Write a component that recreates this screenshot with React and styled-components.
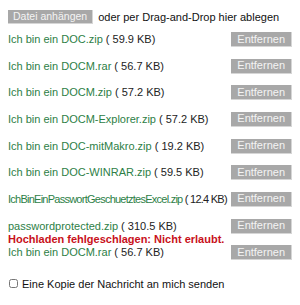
import React from "react";
import styled, { createGlobalStyle } from "styled-components";

const GlobalStyle = createGlobalStyle`
  html, body {
    margin: 0;
    padding: 0;
    background: #fff;
  }
  body {
    font-family: "Liberation Sans", Arial, sans-serif;
    font-size: 11px;
    color: #222;
  }
`;

const Container = styled.div`
  width: 300px;
  height: 305px;
  padding: 10px 8px 0 8px;
  box-sizing: border-box;
`;

const Header = styled.div`
  display: flex;
  align-items: center;
  height: 14px;
  margin-bottom: 8px;
`;

const Button = styled.button`
  font-family: "Liberation Sans", Arial, sans-serif;
  font-size: ${({ $wide }) => ($wide ? "10.5px" : "11px")};
  color: #f4f4f4;
  background-color: #a8a8a8;
  border: none;
  border-right: 1px solid #d6d6d6;
  border-bottom: 1px solid #d6d6d6;
  height: ${({ $wide }) => ($wide ? "14px" : "15px")};
  padding: 0 ${({ $wide }) => ($wide ? "5px" : "6px")};
  line-height: 13px;
  cursor: pointer;
  flex-shrink: 0;
`;

const HintText = styled.span`
  margin-left: 5px;
  color: #111;
`;

const FileList = styled.ul`
  list-style: none;
  margin: 0;
  padding: 0;
`;

const FileRow = styled.li`
  display: flex;
  justify-content: space-between;
  align-items: flex-start;
  height: 26.67px;
`;

const FileInfo = styled.div`
  min-width: 0;
  padding-top: 1px;
  line-height: 13px;
  white-space: nowrap;
  letter-spacing: ${({ $tight }) => ($tight ? "-0.75px" : "0")};
`;

const FileName = styled.a`
  color: #2d8046;
  text-decoration: none;
`;

const ErrorText = styled.div`
  color: #c8101a;
  font-weight: bold;
  letter-spacing: 0;
`;

const CopyLabel = styled.label`
  display: flex;
  align-items: center;
  margin-top: 6px;
  color: #111;

  input {
    margin: 0 4px 0 1px;
    width: 9px;
    height: 9px;
  }
`;

const FILES = [
  { name: "Ich bin ein DOC.zip", size: "59.9 KB" },
  { name: "Ich bin ein DOCM.rar", size: "56.7 KB" },
  { name: "Ich bin ein DOCM.zip", size: "57.2 KB" },
  { name: "Ich bin ein DOCM-Explorer.zip", size: "57.2 KB" },
  { name: "Ich bin ein DOC-mitMakro.zip", size: "19.2 KB" },
  { name: "Ich bin ein DOC-WINRAR.zip", size: "59.5 KB" },
  { name: "IchBinEinPasswortGeschuetztesExcel.zip", size: "12.4 KB", tight: true },
  {
    name: "passwordprotected.zip",
    size: "310.5 KB",
    error: "Hochladen fehlgeschlagen: Nicht erlaubt.",
  },
  { name: "Ich bin ein DOCM.rar", size: "56.7 KB" },
];

const App = () => {
  return (
    <Container>
      <GlobalStyle />
      <Header>
        <Button $wide>Datei anhängen</Button>
        <HintText>oder per Drag-and-Drop hier ablegen</HintText>
      </Header>
      <FileList>
        {FILES.map((file, i) => (
          <FileRow key={i}>
            <FileInfo $tight={file.tight}>
              <FileName href="#">{file.name}</FileName>
              {` ( ${file.size})`}
              {file.error && <ErrorText>{file.error}</ErrorText>}
            </FileInfo>
            <Button>Entfernen</Button>
          </FileRow>
        ))}
      </FileList>
      <CopyLabel>
        <input type="checkbox" />
        Eine Kopie der Nachricht an mich senden
      </CopyLabel>
    </Container>
  );
};

export default App;
